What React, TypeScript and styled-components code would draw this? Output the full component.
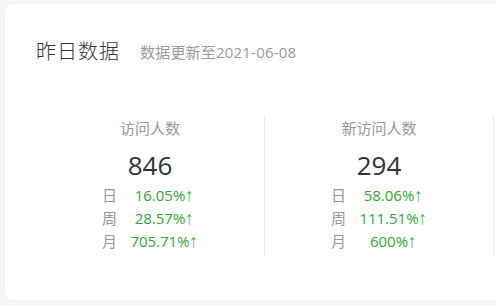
import React from "react";
import styled, { createGlobalStyle } from "styled-components";

interface Stat {
  title: string;
  value: number;
  day: string;
  week: string;
  month: string;
}

const stats: Stat[] = [
  { title: "访问人数", value: 846, day: "16.05%", week: "28.57%", month: "705.71%" },
  { title: "新访问人数", value: 294, day: "58.06%", week: "111.51%", month: "600%" },
];

const App = () => {
  return (
    <>
      <GlobalStyle />
      <Page>
        <Card>
          <Header>
            <Title>昨日数据</Title>
            <SubTitle>数据更新至2021-06-08</SubTitle>
          </Header>
          <Columns>
            {stats.map((stat) => (
              <Column key={stat.title}>
                <Label>{stat.title}</Label>
                <Number>{stat.value}</Number>
                <Rates>
                  <RateLabel>日</RateLabel>
                  <RateValue>
                    {stat.day}
                    <Arrow>↑</Arrow>
                  </RateValue>
                  <RateLabel>周</RateLabel>
                  <RateValue>
                    {stat.week}
                    <Arrow>↑</Arrow>
                  </RateValue>
                  <RateLabel>月</RateLabel>
                  <RateValue>
                    {stat.month}
                    <Arrow>↑</Arrow>
                  </RateValue>
                </Rates>
              </Column>
            ))}
          </Columns>
        </Card>
      </Page>
    </>
  );
};

export default App;

const GlobalStyle = createGlobalStyle`
  html, body {
    margin: 0;
    padding: 0;
    background: #f6f6f6;
    overflow: hidden;
  }
  body {
    font-family: "Open Sans", "Noto Sans CJK SC", sans-serif;
  }
`;

const Page = styled.div`
  width: 496px;
  height: 305px;
  padding: 4px 0 0 5px;
  box-sizing: border-box;
  overflow: hidden;
`;

const Card = styled.div`
  width: 760px;
  height: 296px;
  box-sizing: border-box;
  padding: 32px 0 0 31px;
  background: #fff;
  border-radius: 6px;
  box-shadow: 0 0 3px rgba(0, 0, 0, 0.06);
`;

const Header = styled.div`
  display: flex;
  align-items: center;
  height: 28px;
`;

const Title = styled.h2`
  margin: 0;
  font-size: 20px;
  font-weight: 300;
  letter-spacing: 1px;
  color: #333;
  font-family: "Noto Sans CJK SC", sans-serif;
`;

const SubTitle = styled.span`
  margin-left: 20px;
  margin-top: 3px;
  font-size: 15px;
  letter-spacing: 0.2px;
  color: #9a9a9a;
`;

const Columns = styled.div`
  display: flex;
  margin-top: 52px;
`;

const Column = styled.div`
  width: 229px;
  height: 139px;
  padding-top: 2px;
  box-sizing: border-box;
  border-right: 1px solid #e9e9e9;
  display: flex;
  flex-direction: column;
  align-items: center;
`;

const Label = styled.div`
  font-size: 15px;
  line-height: 20px;
  color: #999;
`;

const Number = styled.div`
  margin-top: 10px;
  font-size: 26px;
  line-height: 34px;
  color: #333;
`;

const Rates = styled.div`
  display: grid;
  grid-template-columns: 28px 72px;
  grid-auto-rows: 23px;
  margin-top: 2px;
  font-size: 15px;
  line-height: 23px;
`;

const RateLabel = styled.span`
  padding-left: 2px;
  color: #999;
`;

const RateValue = styled.span`
  text-align: center;
  white-space: nowrap;
  color: #2fa833;
`;

const Arrow = styled.span`
  display: inline-block;
  font-family: "Liberation Sans", sans-serif;
  font-size: 16px;
  font-weight: 700;
  line-height: 1;
  transform: scaleY(1.15);
  transform-origin: 50% 75%;
`;
